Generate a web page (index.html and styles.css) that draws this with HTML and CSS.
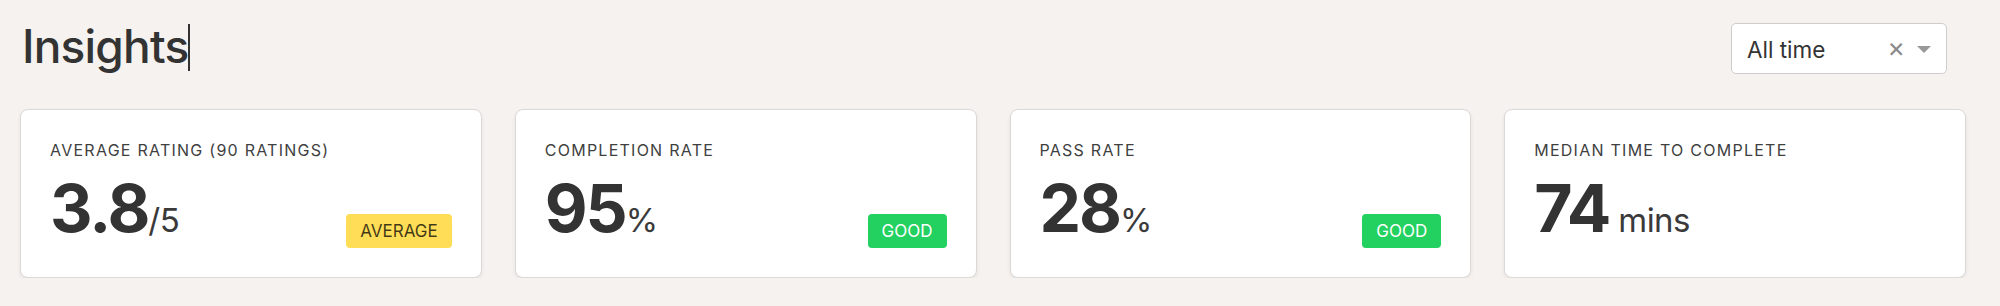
FILE: index.html
```html
<!DOCTYPE html>
<html lang="en">
<head>
<meta charset="utf-8">
<title>Insights</title>
<link rel="stylesheet" href="styles.css">
</head>
<body>
<div class="page">
  <header class="header">
    <h1 class="title">Insights<span class="caret"></span></h1>
    <div class="select">
      <span class="select-value">All time</span>
      <span class="select-clear">×</span>
      <span class="select-arrow"></span>
    </div>
  </header>
  <section class="cards">
    <div class="card">
      <div class="card-label">Average rating (90 ratings)</div>
      <div class="card-row">
        <div class="card-value">3.8<span class="unit">/5</span></div>
        <span class="tag tag-warning">AVERAGE</span>
      </div>
    </div>
    <div class="card">
      <div class="card-label">Completion rate</div>
      <div class="card-row">
        <div class="card-value">95<span class="unit">%</span></div>
        <span class="tag tag-success">GOOD</span>
      </div>
    </div>
    <div class="card">
      <div class="card-label">Pass rate</div>
      <div class="card-row">
        <div class="card-value">28<span class="unit">%</span></div>
        <span class="tag tag-success">GOOD</span>
      </div>
    </div>
    <div class="card">
      <div class="card-label">Median time to complete</div>
      <div class="card-row">
        <div class="card-value">74<span class="unit"> mins</span></div>
      </div>
    </div>
  </section>
</div>
</body>
</html>
```

FILE: styles.css
```css
* { box-sizing: border-box; }
html, body {
  margin: 0;
  padding: 0;
  background: #f5f2ef;
}
body {
  font-family: Inter, "Noto Sans", sans-serif;
  color: #333;
}
.page {
  padding: 18px 34px 0 20px;
}
.header {
  display: flex;
  justify-content: space-between;
  align-items: flex-end;
  margin-right: 19px;
}
.title {
  margin: 0;
  padding-left: 2px;
  font-size: 46px;
  font-weight: 500;
  line-height: 56px;
  letter-spacing: -0.8px;
  color: #333;
  display: flex;
  align-items: center;
}
.caret {
  display: inline-block;
  width: 1.5px;
  height: 47px;
  background: #333;
  margin-left: 0;
  margin-top: 2px;
}
.select {
  width: 216px;
  height: 51px;
  background: #fff;
  border: 1px solid #cfcccb;
  border-radius: 5px;
  display: flex;
  align-items: center;
  padding: 0 15px 0 15px;
}
.select-value {
  flex: 1;
  font-size: 22.5px;
  color: #333;
  padding-top: 1px;
}
.select-clear {
  font-size: 27px;
  color: #8a8a8a;
  line-height: 1;
  margin-right: 12px;
  margin-top: -2px;
}
.select-arrow {
  width: 0;
  height: 0;
  border-left: 7px solid transparent;
  border-right: 7px solid transparent;
  border-top: 7px solid #999;
  margin-top: 1px;
}
.cards {
  margin-top: 35px;
  display: grid;
  grid-template-columns: repeat(4, 1fr);
  gap: 33px;
}
.card {
  background: #fff;
  border: 1px solid #dcd8d5;
  border-radius: 8px;
  box-shadow: 0 2px 4px rgba(0, 0, 0, 0.07);
  padding: 30px 29px 29px 29px;
  display: flex;
  flex-direction: column;
}
.card-label {
  font-size: 16px;
  line-height: 20px;
  text-transform: uppercase;
  letter-spacing: 1.25px;
  color: #3f3f3f;
}
.card-row {
  margin-top: 8px;
  display: flex;
  justify-content: space-between;
  align-items: flex-end;
}
.card-value {
  font-size: 66px;
  font-weight: 700;
  line-height: 80px;
  color: #333;
  letter-spacing: -2px;
}
.unit {
  font-size: 33px;
  font-weight: 400;
  line-height: 1;
  letter-spacing: -0.5px;
  color: #3a3a3a;
}
.tag {
  height: 34px;
  line-height: 34px;
  padding: 0 14px;
  border-radius: 4px;
  font-size: 17px;
  font-weight: 400;
}
.tag-warning {
  background: #ffdd57;
  color: rgba(0, 0, 0, 0.75);
}
.tag-success {
  background: #23d160;
  color: #fff;
}
```
